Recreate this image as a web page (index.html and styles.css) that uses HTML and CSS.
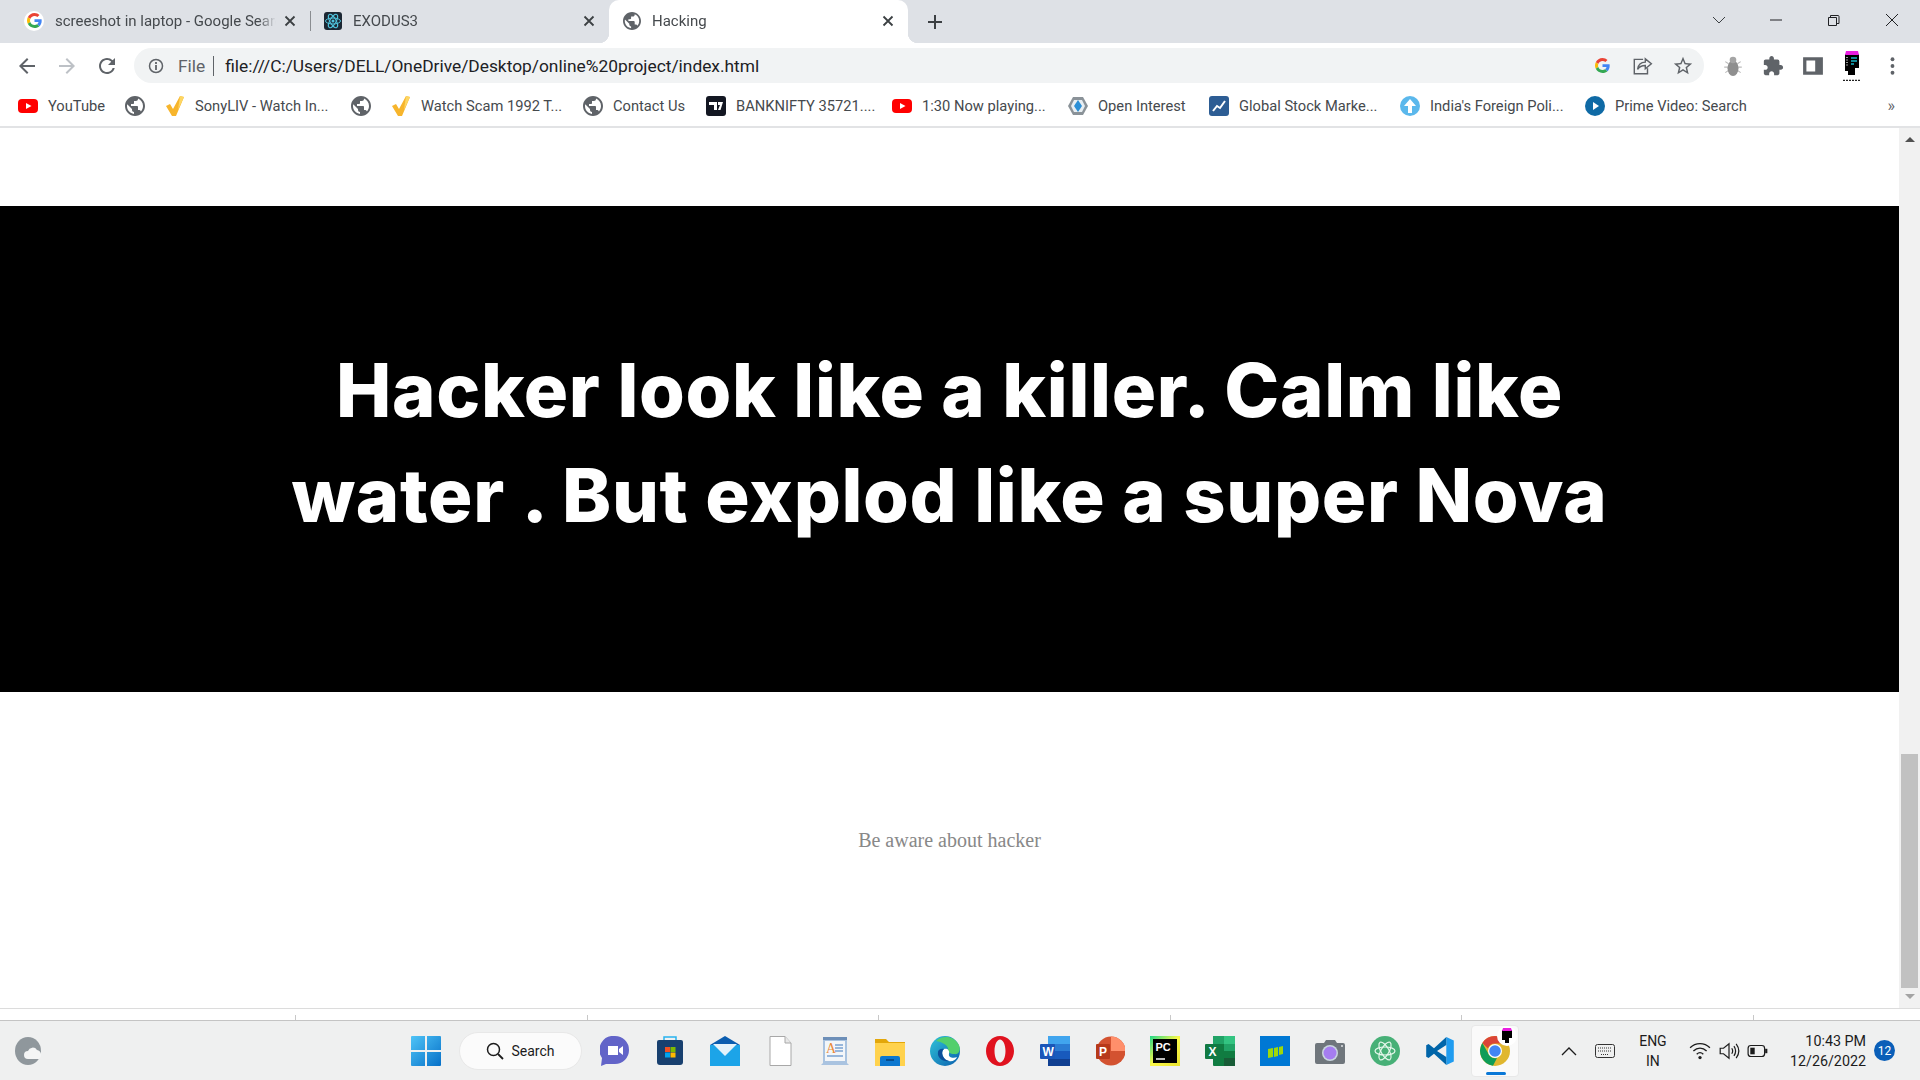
FILE: index.html
```html
<!DOCTYPE html>
<html lang="en">
<head>
  <meta charset="UTF-8" />
  <title>Hacking</title>
  <link rel="stylesheet" href="styles.css">
</head>
<body>

  <svg class="defs" width="0" height="0">
    <symbol id="g-logo" viewBox="0 0 48 48">
      <path fill="#ea4335" d="M24 9.5c3.54 0 6.71 1.22 9.21 3.6l6.85-6.85C35.9 2.38 30.47 0 24 0 14.62 0 6.51 5.38 2.56 13.22l7.98 6.19C12.43 13.72 17.74 9.5 24 9.5z"/>
      <path fill="#4285f4" d="M46.98 24.55c0-1.57-.15-3.09-.38-4.55H24v9.02h12.94c-.58 2.96-2.26 5.48-4.78 7.18l7.73 6c4.51-4.18 7.09-10.36 7.09-17.65z"/>
      <path fill="#fbbc05" d="M10.53 28.59c-.48-1.45-.76-2.99-.76-4.59s.27-3.14.76-4.59l-7.98-6.19C.92 16.46 0 20.12 0 24c0 3.88.92 7.54 2.56 10.78l7.97-6.19z"/>
      <path fill="#34a853" d="M24 48c6.48 0 11.93-2.13 15.89-5.81l-7.73-6c-2.15 1.45-4.92 2.3-8.16 2.3-6.26 0-11.57-4.22-13.47-9.91l-7.98 6.19C6.51 42.62 14.62 48 24 48z"/>
    </symbol>
    <symbol id="globe" viewBox="2 2 20 20">
      <path fill="#5f6368" d="M12 2C6.48 2 2 6.48 2 12s4.48 10 10 10 10-4.48 10-10S17.52 2 12 2zm-1 17.93c-3.95-.49-7-3.85-7-7.93 0-.62.08-1.21.21-1.79L9 15v1c0 1.1.9 2 2 2v1.93zm6.9-2.54c-.26-.81-1-1.39-1.9-1.39h-1v-3c0-.55-.45-1-1-1H8v-2h2c.55 0 1-.45 1-1V7h2c1.1 0 2-.9 2-2v-.41c2.93 1.19 5 4.06 5 7.41 0 2.08-.8 3.97-2.1 5.39z"/>
    </symbol>
    <symbol id="yt" viewBox="0 0 20 20">
      <rect x="0" y="3" width="20" height="14" rx="4" fill="#f00"/>
      <path fill="#fff" d="M8 7l5.5 3L8 13z"/>
    </symbol>
    <symbol id="tick" viewBox="0 0 20 20">
      <path fill="#f7b52c" d="M1 10l4-2 3 5L15 0l4 1-8 19H7z"/>
      <path fill="#fdd663" d="M15 0l4 1-6 13z"/>
    </symbol>
    <symbol id="close-x" viewBox="0 0 12 12">
      <path stroke="#3c4043" stroke-width="1.800" d="M1.500 1.500l9 9M10.500 1.500l-9 9"/>
    </symbol>
  </svg>

  <div class="tab-strip">
    <div class="tab">
      <span class="fav-round"><svg class="fav-g"><use href="#g-logo"/></svg></span>
      <span class="tab-title">screeshot in laptop - Google Search</span>
      <svg class="tab-close"><use href="#close-x"/></svg>
    </div>
    <div class="tab tab-sep">
      <svg class="fav" viewBox="0 0 18 18">
        <rect width="18" height="18" rx="3" fill="#1c2733"/>
        <g fill="none" stroke="#4fc3dc" stroke-width="1">
          <ellipse cx="9" cy="9" rx="7.500" ry="3"/>
          <ellipse cx="9" cy="9" rx="7.500" ry="3" transform="rotate(60 9 9)"/>
          <ellipse cx="9" cy="9" rx="7.500" ry="3" transform="rotate(120 9 9)"/>
        </g>
        <circle cx="9" cy="9" r="1.500" fill="#4fc3dc"/>
      </svg>
      <span class="tab-title">EXODUS3</span>
      <svg class="tab-close"><use href="#close-x"/></svg>
    </div>
    <div class="tab tab-active">
      <svg class="fav"><use href="#globe"/></svg>
      <span class="tab-title">Hacking</span>
      <svg class="tab-close"><use href="#close-x"/></svg>
    </div>
    <svg class="new-tab" viewBox="0 0 14 14"><path stroke="#3c4043" stroke-width="2" d="M7 0v14M0 7h14"/></svg>
    <div class="win-controls">
      <svg class="win-btn" viewBox="0 0 14 14"><path fill="none" stroke="#3c4043" d="M1 4l6 6 6-6"/></svg>
      <svg class="win-btn" viewBox="0 0 14 14"><path stroke="#202124" d="M1 7h12"/></svg>
      <svg class="win-btn" viewBox="0 0 14 14"><path fill="none" stroke="#202124" d="M2.500 4.500h8v8h-8zM4.500 4.500v-2h7.500a1 1 0 0 1 1 1v7h-2.500"/></svg>
      <svg class="win-btn" viewBox="0 0 14 14"><path stroke="#202124" d="M1 1l12 12M13 1L1 13"/></svg>
    </div>
  </div>

  <div class="toolbar">
    <svg class="nav-icon" viewBox="0 0 24 24"><path fill="#5f6368" d="M20 11H7.830l5.590-5.590L12 4l-8 8 8 8 1.410-1.410L7.830 13H20v-2z"/></svg>
    <svg class="nav-icon" viewBox="0 0 24 24"><path fill="#bdc1c6" d="M4 11h12.170l-5.590-5.590L12 4l8 8-8 8-1.410-1.410L16.170 13H4v-2z"/></svg>
    <svg class="nav-icon" viewBox="0 0 24 24"><path fill="#5f6368" d="M17.650 6.350A7.958 7.958 0 0 0 12 4c-4.420 0-7.990 3.580-7.990 8s3.570 8 7.990 8c3.730 0 6.840-2.550 7.730-6h-2.080A5.990 5.990 0 0 1 12 18c-3.310 0-6-2.690-6-6s2.690-6 6-6c1.660 0 3.140.690 4.220 1.780L13 11h7V4l-2.350 2.350z"/></svg>
    <div class="omnibox">
      <svg class="info-icon" viewBox="0 0 16 16">
        <circle cx="8" cy="8" r="6.500" fill="none" stroke="#5f6368" stroke-width="1.500"/>
        <path stroke="#5f6368" stroke-width="1.800" d="M8 7v5M8 4v2"/>
      </svg>
      <span class="scheme">File</span>
      <span class="url">file:///C:/Users/DELL/OneDrive/Desktop/online%20project/index.html</span>
      <svg class="omni-icon omni-g"><use href="#g-logo"/></svg>
      <svg class="omni-icon" viewBox="0 0 20 20"><path fill="none" stroke="#5f6368" stroke-width="1.300" d="M11 4H3v13h12v-5M6 13c.5-4 3-6.500 7-6.500V3.500L18.500 8 13 12.500V9.500c-3 0-5.500 1-7 3.500z"/></svg>
      <svg class="omni-icon" viewBox="0 0 24 24"><path fill="#5f6368" d="M22 9.240l-7.190-.620L12 2 9.190 8.630 2 9.240l5.460 4.730L5.820 21 12 17.270 18.180 21l-1.630-7.030L22 9.240zM12 15.400l-3.760 2.270 1-4.280-3.320-2.880 4.380-.380L12 6.100l1.710 4.040 4.380.380-3.320 2.880 1 4.280L12 15.400z"/></svg>
    </div>
    <div class="ext-icons">
      <svg class="ext-icon" viewBox="0 0 20 20">
        <path stroke="#bbb" stroke-width="1" d="M3 6l3 2M17 6l-3 2M2 11h4M18 11h-4M3 16l3-2M17 16l-3-2"/>
        <ellipse cx="10" cy="12" rx="5" ry="7" fill="#8f8f8f"/>
        <circle cx="10" cy="4.500" r="3" fill="#a5a5a5"/>
      </svg>
      <svg class="ext-icon" viewBox="0 0 24 24"><path fill="#5f6368" d="M20.500 11H19V7c0-1.100-.9-2-2-2h-4V3.500C13 2.120 11.880 1 10.500 1S8 2.120 8 3.500V5H4c-1.100 0-1.990.9-1.990 2v3.800H3.500c1.490 0 2.700 1.210 2.700 2.700s-1.210 2.700-2.700 2.700H2V20c0 1.100.9 2 2 2h3.800v-1.500c0-1.490 1.210-2.700 2.700-2.700 1.490 0 2.700 1.210 2.700 2.700V22H17c1.100 0 2-.9 2-2v-4h1.500c1.380 0 2.500-1.120 2.500-2.500S21.880 11 20.500 11z"/></svg>
      <svg class="ext-icon" viewBox="0 0 20 20"><path fill="#5f6368" fill-rule="evenodd" d="M1 2h18v16H1zM4 5v10h8V5z"/></svg>
      <svg class="profile" viewBox="0 0 20 30">
        <path fill="#000" d="M3 3h14v14h-4v7H6v-4H3z"/>
        <path fill="#e91ee0" d="M4 0h12l1 4H3z"/>
        <path stroke="#17b6c9" stroke-width="1.500" d="M9 7h6M9 10h6M9 13h3"/>
        <path stroke="#999" stroke-width="2" stroke-dasharray="1 1.500" d="M5 6v10"/>
        <path stroke="#222" stroke-width="1.500" stroke-dasharray="2 1" d="M1 29.500h18"/>
      </svg>
      <svg class="ext-icon dots" viewBox="0 0 4 16">
        <circle cx="2" cy="2" r="1.700" fill="#5f6368"/><circle cx="2" cy="8" r="1.700" fill="#5f6368"/><circle cx="2" cy="14" r="1.700" fill="#5f6368"/>
      </svg>
    </div>
  </div>

  <div class="bookmarks">
    <a class="bm bm-1"><svg class="bm-icon"><use href="#yt"/></svg>YouTube</a>
    <a class="bm bm-2"><svg class="bm-icon"><use href="#globe"/></svg></a>
    <a class="bm bm-3"><svg class="bm-icon"><use href="#tick"/></svg>SonyLIV - Watch In...</a>
    <a class="bm bm-2"><svg class="bm-icon"><use href="#globe"/></svg></a>
    <a class="bm bm-4"><svg class="bm-icon"><use href="#tick"/></svg>Watch Scam 1992 T...</a>
    <a class="bm bm-5"><svg class="bm-icon"><use href="#globe"/></svg>Contact Us</a>
    <a class="bm bm-6">
      <svg class="bm-icon" viewBox="0 0 20 20">
        <rect width="20" height="20" rx="3" fill="#131722"/>
        <path fill="#fff" d="M3 6h8v8H8V9H3zM12 6h5l-2.500 8H12l2-5h-2z"/>
      </svg>BANKNIFTY 35721....</a>
    <a class="bm bm-7"><svg class="bm-icon"><use href="#yt"/></svg>1:30 Now playing...</a>
    <a class="bm bm-8">
      <svg class="bm-icon" viewBox="0 0 20 20">
        <path fill="#8a9298" d="M5 1h10l5 9-5 9H5l-5-9z"/>
        <path fill="#e8eef2" d="M6 4h8l3 6-3 6H6l-3-6z"/>
        <path fill="#2b8fd6" d="M10 4l4 6-4 6-4-6z"/>
      </svg>Open Interest</a>
    <a class="bm bm-9">
      <svg class="bm-icon" viewBox="0 0 20 20">
        <rect width="20" height="20" rx="3" fill="#2d5d94"/>
        <path fill="none" stroke="#fff" stroke-width="2" d="M4 15l4-5 3 2 5-7"/>
      </svg>Global Stock Marke...</a>
    <a class="bm bm-10">
      <svg class="bm-icon" viewBox="0 0 20 20">
        <circle cx="10" cy="10" r="10" fill="#5bb8ec"/>
        <path fill="#fff" d="M10 3l6 7h-4v7H8v-7H4z"/>
      </svg>India's Foreign Poli...</a>
    <a class="bm bm-11">
      <svg class="bm-icon" viewBox="0 0 20 20">
        <circle cx="10" cy="10" r="10" fill="#0f6aa5"/>
        <path fill="#fff" d="M8 6l6 4-6 4z"/>
      </svg>Prime Video: Search</a>
    <span class="bm-more">»</span>
  </div>

  <div class="viewport">
    <div class="page">
      <section class="banner">
        <h1>Hacker look like a killer. Calm like water . But explod like a super Nova</h1>
      </section>
      <section class="note">
        <p>Be aware about hacker</p>
      </section>
    </div>
    <div class="scrollbar">
      <span class="arrow-up"></span>
      <span class="thumb"></span>
      <span class="arrow-down"></span>
    </div>
  </div>

  <div class="under-strip">
    <span class="tick"></span><span class="tick"></span><span class="tick"></span><span class="tick"></span><span class="tick"></span><span class="tick"></span>
  </div>

  <div class="taskbar">
    <svg class="weather" viewBox="0 0 30 30">
      <ellipse cx="13" cy="15" rx="13" ry="14" fill="#8f979c"/>
      <path fill="#f4f5f5" d="M13 23a4 4 0 0 1 0-8 5 5 0 0 1 9-1 5 5 0 0 1 2 9z"/>
    </svg>
    <div class="apps">
      <svg class="app win-logo" viewBox="0 0 30 30">
        <defs><linearGradient id="win-g" x1="0" y1="0" x2="1" y2="1"><stop offset="0" stop-color="#4fc4f7"/><stop offset="1" stop-color="#0670c8"/></linearGradient></defs>
        <path fill="url(#win-g)" d="M0 1a1 1 0 0 1 1-1h13v14H0zM16 0h13a1 1 0 0 1 1 1v13H16zM0 16h14v14H1a1 1 0 0 1-1-1zM16 16h14v13a1 1 0 0 1-1 1H16z"/>
      </svg>
      <div class="search-pill">
        <svg class="search-icon" viewBox="0 0 18 18"><circle cx="7.500" cy="7.500" r="6" fill="none" stroke="#1c1c1c" stroke-width="1.500"/><path stroke="#1c1c1c" stroke-width="1.800" d="M12 12l5 5"/></svg>
        Search
      </div>
      <svg class="app" viewBox="0 0 30 30">
        <path fill="#6264c8" d="M15 0a14 14 0 0 1 0 28H6l-5 2 1-8A14 14 0 0 1 15 0z"/>
        <path fill="#fff" d="M8 10h10v9H8zM19 13l4-3v9l-4-3z"/>
      </svg>
      <svg class="app" viewBox="0 0 30 30">
        <path fill="none" stroke="#29b2ee" stroke-width="1.500" d="M9 5V1h12v4"/>
        <path fill="#18406f" d="M2 6a2 2 0 0 1 2-2h22a2 2 0 0 1 2 2v20a3 3 0 0 1-3 3H5a3 3 0 0 1-3-3z"/>
        <rect x="10" y="11" width="5" height="5" fill="#f25022"/><rect x="15.500" y="11" width="5" height="5" fill="#7fba00"/>
        <rect x="10" y="16.500" width="5" height="5" fill="#00a4ef"/><rect x="15.500" y="16.500" width="5" height="5" fill="#ffb900"/>
      </svg>
      <svg class="app" viewBox="0 0 30 30">
        <path fill="#0a5db0" d="M15 0L30 9v2H0V9z"/>
        <path fill="#1ca4e8" d="M0 9h30v21H0z"/>
        <path fill="#e4f3fb" d="M3 8h24L15 20z"/>
      </svg>
      <svg class="app" viewBox="0 0 30 30"><path fill="#fff" stroke="#a8a8a8" d="M5 .5h15L26 7v22.500H5z"/><path fill="#e8e8e8" stroke="#a8a8a8" d="M20 .5V7h6"/></svg>
      <svg class="app" viewBox="0 0 30 30">
        <path fill="#a9c3e0" d="M3 1h24v26l2 2H1l2-2z"/>
        <path fill="#f3f6f9" d="M5 5h20v20H5z"/>
        <path fill="#6d8fb8" d="M3 1h24v3H3z"/>
        <text class="note-letter" x="6" y="17">A</text>
        <path stroke="#7ba2d1" stroke-width="1.500" d="M15 9h8M15 12h8M15 15h8M7 20h16"/>
      </svg>
      <svg class="app" viewBox="0 0 30 30">
        <path fill="#e3a70a" d="M0 3h11l3 3h16v5H0z"/>
        <path fill="#ffd24d" d="M0 7h30v23H0z"/>
        <path fill="#0d78d0" d="M5 22a2 2 0 0 1 2-2h16a2 2 0 0 1 2 2v8H5z"/>
        <path stroke="#063f78" stroke-width="1.500" d="M11 24h8"/>
      </svg>
      <svg class="app" viewBox="0 0 30 30">
        <defs><linearGradient id="edge-g" x1="0" y1="0" x2="1" y2="1"><stop offset="0" stop-color="#2fc4d8"/><stop offset="1" stop-color="#0b5fae"/></linearGradient></defs>
        <circle cx="15" cy="15" r="15" fill="url(#edge-g)"/>
        <path fill="#52cf6d" d="M6 5C12-1 24-1 29 9c2 5 0 10-5 9-4 0-6-2-6-5 0-4-6-7-12-8z"/>
        <path fill="#fff" d="M14 13c3-1 6 1 5 5-1 3 4 5 8 3-1 3-5 5-8 4-6-1-9-9-5-12z"/>
        <path fill="#0c4f9a" d="M14 13c-4 3-1 11 5 12-6 1-12-3-11-9 0-2 3-4 6-3z"/>
      </svg>
      <svg class="app" viewBox="0 0 30 30">
        <path fill="#e0121f" fill-rule="evenodd" d="M15 0c8 0 14 6.700 14 15s-6 15-14 15S1 23.300 1 15 7 0 15 0zM15 3.500c-3 0-5.500 5-5.500 11.500S12 26.500 15 26.500 20.500 21.500 20.500 15 18 3.500 15 3.500z"/>
      </svg>
      <svg class="app" viewBox="0 0 30 30">
        <rect x="8" y="0" width="22" height="30" rx="1" fill="#2b7cd3"/>
        <path fill="#41a5ee" d="M8 0h22v8H8z"/><path fill="#185abd" d="M8 15h22v8H8z"/><path fill="#103f91" d="M8 23h22v7H8z"/>
        <rect x="0" y="8" width="15" height="15" rx="1" fill="#1a56b8"/>
        <text class="office-letter" x="2.500" y="20">W</text>
      </svg>
      <svg class="app" viewBox="0 0 30 30">
        <circle cx="16" cy="15" r="14.500" fill="#d35230"/>
        <path fill="#ff8f6b" d="M16 .5A14.500 14.500 0 0 1 30.500 15H16z"/>
        <rect x="1" y="8" width="14" height="15" rx="1" fill="#b7391a"/>
        <text class="office-letter" x="4" y="20">P</text>
      </svg>
      <svg class="app" viewBox="0 0 30 30">
        <defs><linearGradient id="pc-g" x1="0" y1="0" x2="1" y2="1"><stop offset="0" stop-color="#21d789"/><stop offset=".5" stop-color="#fcf84a"/><stop offset="1" stop-color="#e8e230"/></linearGradient></defs>
        <rect width="30" height="30" fill="url(#pc-g)"/>
        <rect x="3" y="3" width="24" height="24" fill="#000"/>
        <text class="pc-letter" x="5.500" y="15">PC</text>
        <path stroke="#fff" stroke-width="1.500" d="M6 23h9"/>
      </svg>
      <svg class="app" viewBox="0 0 30 30">
        <rect x="8" y="0" width="22" height="30" rx="1" fill="#107c41"/>
        <path fill="#33c481" d="M19 0h11v8H19z"/><path fill="#21a366" d="M8 0h11v8H8zM19 8h11v7H19z"/><path fill="#185c37" d="M19 22h11v8H19z"/>
        <rect x="0" y="8" width="15" height="15" rx="1" fill="#117a43"/>
        <text class="office-letter" x="3.500" y="20">X</text>
      </svg>
      <svg class="app" viewBox="0 0 30 30">
        <rect width="30" height="30" fill="#0078d4"/>
        <path fill="#9fd80a" d="M8 13l5-1v9l-5 1zM14 12l4-1v9l-4 1zM19 11l4-1v8l-4 1z"/>
      </svg>
      <svg class="app" viewBox="0 0 30 30">
        <path fill="#6f767c" d="M2 7h7l2-3h9l2 3h6a2 2 0 0 1 2 2v17a2 2 0 0 1-2 2H2a2 2 0 0 1-2-2V9a2 2 0 0 1 2-2z"/>
        <circle cx="15" cy="17" r="8" fill="#c9d6df"/>
        <circle cx="15" cy="17" r="6.500" fill="#a57df0"/>
        <circle cx="27" cy="10" r="1" fill="#dfe2e4"/>
      </svg>
      <svg class="app" viewBox="0 0 30 30">
        <circle cx="15" cy="15" r="15" fill="#47b077"/>
        <g fill="none" stroke="#e6f7ec" stroke-width="1.200">
          <ellipse cx="15" cy="15" rx="10" ry="4"/>
          <ellipse cx="15" cy="15" rx="10" ry="4" transform="rotate(60 15 15)"/>
          <ellipse cx="15" cy="15" rx="10" ry="4" transform="rotate(120 15 15)"/>
        </g>
      </svg>
      <svg class="app" viewBox="0 0 100 100">
        <path fill="#1f9cf0" d="M71 3l25 12v70L71 97z"/>
        <path fill="#0065a9" d="M71 3L30 41 12 27l-8 4v38l8 4 18-14 41 38V70L40 50l31-20z"/>
      </svg>
      <div class="app-chrome">
        <svg class="chrome-logo" viewBox="0 0 30 30">
          <circle cx="15" cy="15" r="15" fill="#e0b72f"/>
          <path fill="#db4437" d="M15 0a15 15 0 0 1 13 7.500H15a7.500 7.500 0 0 0-7 5L2.300 7A15 15 0 0 1 15 0z"/>
          <path fill="#0f9d58" d="M2.300 7L8 17a7.500 7.500 0 0 0 9 5l-4 7.800A15 15 0 0 1 2.300 7z"/>
          <circle cx="15" cy="15" r="7" fill="#fff"/>
          <circle cx="15" cy="15" r="5.800" fill="#4285f4"/>
        </svg>
        <svg class="chrome-badge" viewBox="0 0 20 20">
          <circle cx="10" cy="10" r="10" fill="#fff"/>
          <path fill="#000" d="M5 4h10v8h-3v5H8v-3H5z"/>
          <path fill="#e91ee0" d="M6 2h8l1 3H5z"/>
        </svg>
        <span class="run-mark"></span>
      </div>
    </div>
    <div class="tray">
      <svg class="tray-caret" viewBox="0 0 16 10"><path fill="none" stroke="#1c1c1c" stroke-width="1.300" d="M1 9l7-7 7 7"/></svg>
      <svg class="tray-keys" viewBox="0 0 20 14"><rect x=".5" y=".5" width="19" height="13" rx="2" fill="none" stroke="#333"/><path stroke="#333" stroke-dasharray="1 1" d="M3 4h14M3 7h14M6 10.500h8"/></svg>
      <div class="lang">ENG<br>IN</div>
      <svg class="tray-icon" viewBox="0 0 20 20"><path fill="none" stroke="#1c1c1c" stroke-width="1.200" d="M1 7c5-5 13-5 18 0M4 10c3.500-3.500 8.500-3.500 12 0M7 13c2-2 4-2 6 0"/><circle cx="10" cy="16" r="1.500" fill="#1c1c1c"/></svg>
      <svg class="tray-icon" viewBox="0 0 20 20"><path fill="none" stroke="#1c1c1c" stroke-width="1.100" d="M2 7.500h3L10 3.500v13l-5-4H2zM12.500 7.500c1 1.500 1 3.500 0 5M14.500 5.500c2 3 2 6 0 9M16.500 3.500c3 4 3 9 0 13"/></svg>
      <svg class="tray-icon" viewBox="0 0 20 20"><rect x="1" y="5" width="15" height="10" rx="2.500" fill="none" stroke="#1c1c1c" stroke-width="1.100"/><rect x="3" y="7" width="4" height="6" fill="#1c1c1c"/><path stroke="#1c1c1c" stroke-width="2" d="M17.500 8v4"/></svg>
      <div class="clock"><span>10:43 PM</span><span>12/26/2022</span></div>
      <span class="notif">12</span>
    </div>
  </div>

</body>
</html>
```

FILE: styles.css
```css
* {
  box-sizing: border-box;
}

html, body {
  height: 100%;
}

body {
  margin: 0;
  width: 1920px;
  height: 1080px;
  overflow: hidden;
  font-family: Roboto, Arial, sans-serif;
  display: flex;
  flex-direction: column;
  background-color: #fff;
}

.defs {
  position: absolute;
}

/* tabs */
.tab-strip {
  height: 43px;
  flex: none;
  display: flex;
  align-items: stretch;
  background-color: #dee1e6;
  padding-left: 11px;
}

.tab {
  width: 299px;
  display: flex;
  align-items: center;
  padding: 0 12px 2px 12px;
  font-size: 15px;
  color: #45494d;
  position: relative;
}

.tab-sep::before {
  content: "";
  position: absolute;
  left: 0;
  top: 11px;
  height: 20px;
  width: 1px;
  background-color: #8a8d91;
}

.tab-active {
  background-color: #fff;
  border-radius: 10px 10px 0 0;
}

.tab-active::before,
.tab-active::after {
  content: "";
  position: absolute;
  bottom: 0;
  width: 10px;
  height: 10px;
}

.tab-active::before {
  left: -10px;
  background: radial-gradient(circle at 0 0, #dee1e6 10px, #fff 10.500px);
}

.tab-active::after {
  right: -10px;
  background: radial-gradient(circle at 100% 0, #dee1e6 10px, #fff 10.500px);
}

.fav-round {
  width: 20px;
  height: 20px;
  border-radius: 50%;
  background-color: #fff;
  display: flex;
  align-items: center;
  justify-content: center;
  margin-left: 1px;
  flex: none;
}

.fav-g {
  width: 15px;
  height: 15px;
}

.fav {
  width: 18px;
  height: 18px;
  margin-left: 2px;
  flex: none;
}

.tab-title {
  flex: 1;
  margin-left: 11px;
  white-space: nowrap;
  overflow: hidden;
  -webkit-mask-image: linear-gradient(to right, #000 92%, transparent);
}

.tab-close {
  width: 12px;
  height: 12px;
  flex: none;
  margin-left: 8px;
  margin-right: 2px;
}

.new-tab {
  width: 14px;
  height: 14px;
  align-self: center;
  margin-left: 20px;
}

.win-controls {
  margin-left: auto;
  display: flex;
  align-items: center;
  gap: 43px;
  padding-right: 21px;
  padding-bottom: 4px;
}

.win-btn {
  width: 14px;
  height: 14px;
}

.win-btn:last-child {
  margin-left: 2px;
}

/* toolbar */
.toolbar {
  height: 42px;
  flex: none;
  display: flex;
  align-items: center;
  padding-left: 15px;
  padding-top: 3px;
  gap: 16px;
  background-color: #fff;
}

.nav-icon {
  width: 24px;
  height: 24px;
  flex: none;
}

.omnibox {
  width: 1570px;
  height: 35px;
  margin-left: -1px;
  padding: 0 10px 0 14px;
  border-radius: 18px;
  background-color: #f1f3f4;
  display: flex;
  align-items: center;
  flex: none;
  font-size: 17.360px;
}

.info-icon {
  width: 16px;
  height: 16px;
  flex: none;
}

.scheme {
  color: #5f6368;
  margin-left: 14px;
  padding-right: 8px;
  border-right: 1px solid #5f6368;
  line-height: 20px;
}

.url {
  color: #202124;
  margin-left: 11px;
  margin-right: auto;
  white-space: nowrap;
}

.omni-icon {
  width: 22px;
  height: 22px;
  margin-left: 19px;
  flex: none;
}

.omni-g {
  width: 15px;
  height: 15px;
  margin-right: 2px;
}

.ext-icons {
  display: flex;
  align-items: center;
  gap: 18px;
  margin-left: 2px;
}

.ext-icon {
  width: 22px;
  height: 22px;
  flex: none;
}

.profile {
  width: 20px;
  height: 30px;
  flex: none;
}

.dots {
  width: 5px;
  height: 18px;
  margin-left: 10px;
}

/* bookmarks */
.bookmarks {
  height: 43px;
  flex: none;
  display: flex;
  align-items: center;
  padding-left: 18px;
  border-bottom: 2px solid #e2e3e5;
  font-size: 14.700px;
  color: #45494d;
}

.bm {
  display: flex;
  align-items: center;
  gap: 10px;
  white-space: nowrap;
  flex: none;
}

.bm-icon {
  width: 20px;
  height: 20px;
  flex: none;
}

.bm-1 { width: 107px; }
.bm-2 { width: 40px; }
.bm-3 { width: 186px; }
.bm-4 { width: 192px; }
.bm-5 { width: 123px; }
.bm-6 { width: 186px; }
.bm-7 { width: 176px; }
.bm-8 { width: 141px; }
.bm-9 { width: 191px; }
.bm-10 { width: 185px; }

.bm-more {
  margin-left: auto;
  margin-right: 25px;
  font-size: 16px;
  color: #5f6368;
}

/* page */
.viewport {
  flex: 1;
  display: flex;
  min-height: 0;
  border-bottom: 1px solid #dcdcdc;
}

.page {
  flex: 1;
  display: flex;
  flex-direction: column;
  padding-top: 78px;
}

.banner {
  height: 486px;
  flex: none;
  background-color: #000;
  display: flex;
  align-items: center;
  justify-content: center;
  padding: 0 250px 12px;
}

.banner h1 {
  margin: 0;
  color: #fff;
  font-family: Inter, sans-serif;
  font-size: 74px;
  font-weight: 800;
  line-height: 105px;
  letter-spacing: 0.650px;
  text-align: center;
}

.note {
  flex: 1;
  display: flex;
  align-items: center;
  justify-content: center;
  padding-bottom: 20px;
}

.note p {
  margin: 0;
  font-family: "Liberation Serif", serif;
  font-size: 20px;
  color: #888;
}

.scrollbar {
  width: 21px;
  flex: none;
  background-color: #f1f1f1;
  display: flex;
  flex-direction: column;
  align-items: center;
  padding-bottom: 3px;
}

.arrow-up {
  margin-top: 9px;
  border-left: 5px solid transparent;
  border-right: 5px solid transparent;
  border-bottom: 5px solid #505050;
}

.thumb {
  width: 17px;
  height: 234px;
  margin-top: auto;
  background-color: #c1c1c1;
}

.arrow-down {
  margin-top: 6px;
  margin-bottom: 6px;
  border-left: 5px solid transparent;
  border-right: 5px solid transparent;
  border-top: 5px solid #a3a3a3;
}

.under-strip {
  height: 11px;
  flex: none;
  display: flex;
  padding-left: 295px;
  gap: 290.500px;
  align-items: flex-end;
}

.tick {
  width: 1px;
  height: 5px;
  background-color: #c8c8c8;
}

/* taskbar */
.taskbar {
  height: 60px;
  flex: none;
  display: flex;
  align-items: center;
  background-color: #eff0f0;
  border-top: 1px solid #c4c4c4;
  position: relative;
}

.weather {
  width: 30px;
  height: 30px;
  margin-left: 15px;
  flex: none;
}

.apps {
  display: flex;
  align-items: center;
  margin-left: 366px;
  gap: 25px;
}

.app {
  width: 30px;
  height: 30px;
  flex: none;
}

.win-logo {
  margin-right: -7px;
}

.search-pill {
  width: 123px;
  height: 38px;
  border-radius: 19px;
  background-color: #fbfbfb;
  border: 1px solid #e8e8e8;
  display: flex;
  align-items: center;
  justify-content: center;
  gap: 7px;
  font-size: 14px;
  color: #1c1c1c;
  margin-right: -7px;
}

.search-icon {
  width: 18px;
  height: 18px;
}

.note-letter {
  font-family: "Liberation Serif", serif;
  font-size: 14px;
  fill: #e98a3a;
}

.office-letter {
  font-family: "Liberation Sans", sans-serif;
  font-size: 12px;
  font-weight: 700;
  fill: #fff;
}

.pc-letter {
  font-family: "Liberation Sans", sans-serif;
  font-size: 11px;
  font-weight: 700;
  fill: #fff;
}

.app-chrome {
  width: 48px;
  height: 52px;
  margin-left: -9px;
  margin-right: -9px;
  flex: none;
  background-color: #fafafa;
  border-radius: 4px;
  border: 1px solid #e8e8e8;
  position: relative;
  display: flex;
  align-items: center;
  justify-content: center;
}

.chrome-logo {
  width: 30px;
  height: 30px;
}

.chrome-badge {
  position: absolute;
  right: 1px;
  top: 0;
  width: 20px;
  height: 20px;
}

.run-mark {
  position: absolute;
  left: 14px;
  bottom: 1px;
  width: 20px;
  height: 3px;
  border-radius: 2px;
  background-color: #0a78d7;
}

.tray {
  margin-left: auto;
  display: flex;
  align-items: center;
  color: #1c1c1c;
  font-size: 14px;
  padding-right: 25px;
}

.tray-caret {
  width: 16px;
  height: 10px;
}

.tray-keys {
  width: 20px;
  height: 14px;
  margin-left: 18px;
}

.lang {
  margin-left: 18px;
  width: 40px;
  text-align: center;
  line-height: 20px;
}

.tray-icon {
  width: 22px;
  height: 22px;
  margin-left: 7px;
}

.lang + .tray-icon {
  margin-left: 16px;
}

.clock {
  margin-left: 21px;
  display: flex;
  flex-direction: column;
  align-items: flex-end;
  font-size: 14.300px;
  line-height: 20px;
}

.notif {
  width: 21px;
  height: 21px;
  margin-left: 8px;
  border-radius: 50%;
  background-color: #0a5fb8;
  color: #fff;
  font-size: 12px;
  display: flex;
  align-items: center;
  justify-content: center;
}
```
